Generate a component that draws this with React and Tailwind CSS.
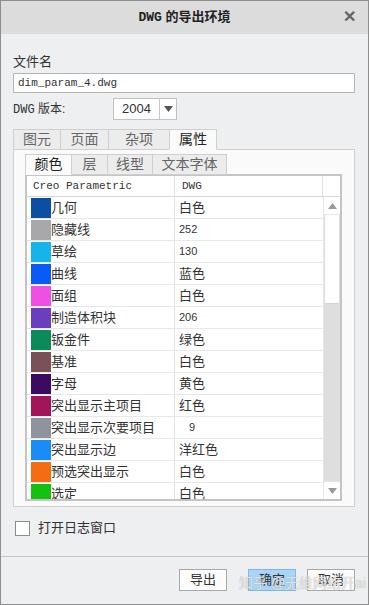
import React from 'react';

const FONT = { fontFamily: '"Liberation Sans", "Noto Sans CJK SC", sans-serif' };
const MONO = { fontFamily: '"Liberation Mono", "Noto Sans CJK SC", monospace' };

const ROWS = [
  { name: '几何', color: '#0b4ea2', value: '白色' },
  { name: '隐藏线', color: '#a8a8ab', value: '252' },
  { name: '草绘', color: '#16b4ea', value: '130' },
  { name: '曲线', color: '#0a5af5', value: '蓝色' },
  { name: '面组', color: '#ef4fe2', value: '白色' },
  { name: '制造体积块', color: '#6a3fbd', value: '206' },
  { name: '钣金件', color: '#0b8a5a', value: '绿色' },
  { name: '基准', color: '#7a5255', value: '白色' },
  { name: '字母', color: '#3a0b61', value: '黄色' },
  { name: '突出显示主项目', color: '#a2155a', value: '红色' },
  { name: '突出显示次要项目', color: '#8e939e', value: '9', indent: true },
  { name: '突出显示边', color: '#1a8cf8', value: '洋红色' },
  { name: '预选突出显示', color: '#f46d12', value: '白色' },
  { name: '选定', color: '#14c010', value: '白色' },
];

const isNum = (v) => /^\d+$/.test(v);

const Tab = ({ label, active, w }) => (
  <div
    className={`flex items-center justify-center border border-[#cfcfcf] -mr-px text-[14px] ${
      active ? 'bg-[#fafafa] text-[#222] border-b-[#fafafa] relative z-10' : 'bg-[#ececec] text-[#666]'
    } ${w}`}
  >
    {label}
  </div>
);

function ColorRow({ row }) {
  return (
    <div className="flex h-[22px] border-b border-[#e8e8e8] bg-white">
      <div className="w-[148px] flex items-center border-r border-[#e3e3e3] overflow-hidden">
        <span className="ml-[4px] w-[20px] h-[20px] shrink-0" style={{ backgroundColor: row.color }} />
        <span className="text-[13px] text-[#333] whitespace-nowrap leading-none">{row.name}</span>
      </div>
      <div className={`flex-1 flex items-center ${row.indent ? 'pl-[14px]' : 'pl-[4px]'}`}>
        <span className={`${isNum(row.value) ? 'text-[11px]' : 'text-[13px]'} text-[#333] leading-none`}>
          {row.value}
        </span>
      </div>
    </div>
  );
}

export default function App() {
  return (
    <div style={FONT} className="relative w-[369px] h-[605px] bg-[#eeeff0] border border-[#8e8e8e] flex flex-col overflow-hidden">
      {/* title bar */}
      <div className="relative h-[33px] bg-[#dcdcdc] flex items-center justify-center shrink-0">
        <span className="text-[13px] font-bold text-[#222]"><span style={MONO}>DWG</span> 的导出环境</span>
        <span className="absolute right-[12px] top-[8px] text-[16px] font-bold text-[#666] leading-none">✕</span>
      </div>

      <div className="px-[12px] flex flex-col">
        <div className="mt-[20px] text-[13px] text-[#333] leading-[16px]">文件名</div>
        <div className="mt-[3px] h-[20px] w-[342px] bg-white border border-[#b4b4b4] flex items-center px-[4px]">
          <span style={MONO} className="text-[11px] text-[#333]">dim_param_4.dwg</span>
        </div>

        <div className="mt-[5px] flex items-center h-[22px]">
          <span className="w-[100px] text-[12px] text-[#333]"><span style={MONO} className="text-[12px]">DWG</span> 版本:</span>
          <div className="h-[22px] w-[64px] bg-white border border-[#c2c2c2] flex items-center">
            <span className="flex-1 text-center text-[13px] text-[#333]">2004</span>
            <span className="w-[17px] h-full border-l border-[#c8c8c8] flex items-center justify-center">
              <svg width="9" height="6" viewBox="0 0 9 6"><path d="M0 0h9L4.5 6z" fill="#555" /></svg>
            </span>
          </div>
        </div>

        {/* outer tabs */}
        <div className="mt-[9px] flex h-[21px]">
          <Tab label="图元" w="w-[48px]" />
          <Tab label="页面" w="w-[49px]" />
          <Tab label="杂项" w="w-[62px]" />
          <Tab label="属性" w="w-[48px]" active />
        </div>
        <div className="-mt-px w-[342px] h-[358px] bg-[#fafafa] border border-[#cfcfcf] px-[11px] pt-[4px]">
          {/* inner tabs */}
          <div className="flex h-[21px]">
            <Tab label="颜色" w="w-[47px]" active />
            <Tab label="层" w="w-[37px]" />
            <Tab label="线型" w="w-[46px]" />
            <Tab label="文本字体" w="w-[75px]" />
          </div>
          {/* table */}
          <div className="-mt-px w-[317px] h-[327px] border-2 border-[#c4c4c4] bg-white flex flex-col overflow-hidden">
            <div className="flex h-[21px] shrink-0 border-b border-[#d8d8d8]">
              <div className="w-[148px] border-r border-[#e0e0e0] flex items-center pl-[6px]">
                <span style={MONO} className="text-[11px] text-[#333]">Creo Parametric</span>
              </div>
              <div className="w-[148px] border-r border-[#e0e0e0] flex items-center pl-[7px]">
                <span style={MONO} className="text-[11px] text-[#333]">DWG</span>
              </div>
              <div className="flex-1" />
            </div>
            <div className="flex flex-1 min-h-0">
              <div className="w-[296px] overflow-hidden">
                {ROWS.map((r) => (
                  <ColorRow key={r.name} row={r} />
                ))}
              </div>
              {/* scrollbar */}
              <div className="flex-1 flex flex-col bg-[#dedede] border-l border-[#e6e6e6]">
                <div className="h-[18px] bg-white flex items-center justify-center border-b border-[#e4e4e4]">
                  <svg width="9" height="6" viewBox="0 0 9 6"><path d="M0 6h9L4.5 0z" fill="#9a9a9a" /></svg>
                </div>
                <div className="h-[89px] bg-white border-b border-[#d2d2d2] mx-[1px]" />
                <div className="flex-1" />
                <div className="h-[18px] bg-white flex items-center justify-center border-t border-[#e4e4e4]">
                  <svg width="9" height="6" viewBox="0 0 9 6"><path d="M0 0h9L4.5 6z" fill="#9a9a9a" /></svg>
                </div>
              </div>
            </div>
          </div>
        </div>

        <label className="mt-[13px] flex items-center h-[16px]">
          <span className="ml-[2px] w-[15px] h-[15px] bg-white border border-[#8c8c8c]" />
          <span className="ml-[8px] text-[13px] text-[#333]">打开日志窗口</span>
        </label>
      </div>

      <div className="mt-[20px] border-t border-[#c6c6c6]" />

      <div className="mt-[12px] flex justify-end gap-[11px] pr-[13px]">
        <button className="w-[48px] h-[22px] bg-[#fcfcfc] border border-[#a8a8a8] text-[13px] text-[#333]">导出</button>
        <button className="ml-[10px] w-[48px] h-[22px] bg-[#a9d4f6] border border-[#7fb8e8] text-[13px] text-[#333]">确定</button>
        <button className="w-[48px] h-[22px] bg-[#fcfcfc] border border-[#a8a8a8] text-[13px] text-[#333]">取消</button>
      </div>

      {/* watermark */}
      <span className="absolute left-[238px] top-[572px] text-[14px] text-white/70 whitespace-nowrap pointer-events-none [text-shadow:0_0_1px_#9a9a9a]">
        知乎 @无维网络开ai
      </span>
    </div>
  );
}
